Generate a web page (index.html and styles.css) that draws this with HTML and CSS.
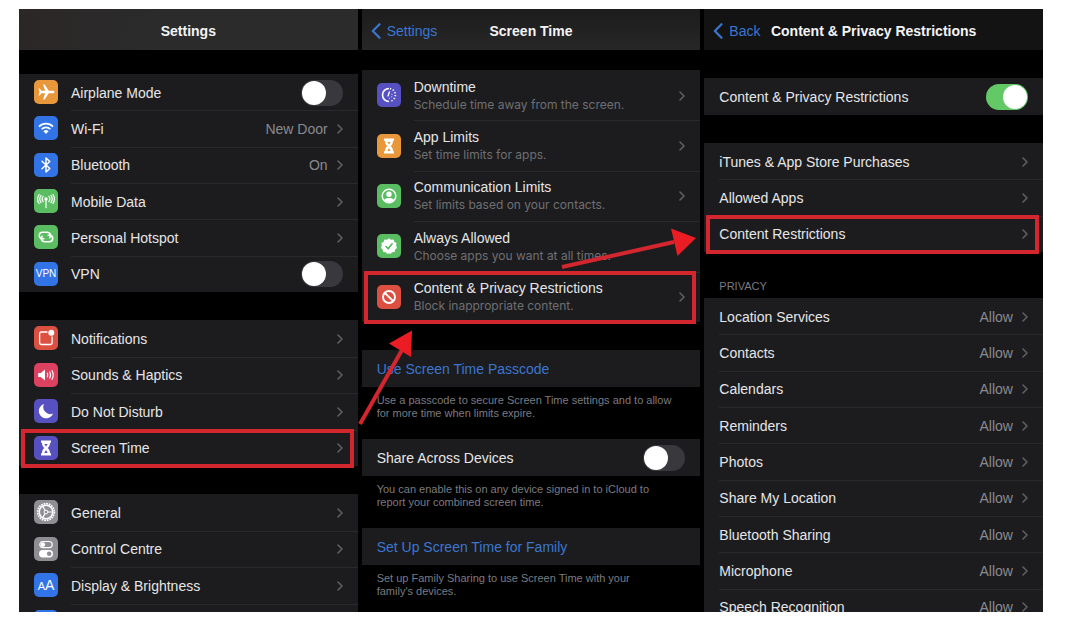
FILE: index.html
```html
<!DOCTYPE html>
<html lang="en">
<head>
<meta charset="utf-8">
<title>Screen Time settings</title>
<link rel="stylesheet" href="styles.css">
</head>
<body>
<svg class="defs" aria-hidden="true">
  <symbol id="chev" viewBox="0 0 6 10"><path d="M1 1l4 4-4 4" fill="none" stroke="currentColor" stroke-width="1.6" stroke-linecap="round" stroke-linejoin="round"/></symbol>
  <symbol id="back" viewBox="0 0 10 16"><path d="M8.500 1.200L1.800 8l6.700 6.800" fill="none" stroke="currentColor" stroke-width="2.200" stroke-linecap="round" stroke-linejoin="round"/></symbol>
  <symbol id="plane" viewBox="0 0 24 24"><path fill="#fff" d="M20.500 12c0 .8-1.100 1.300-2.200 1.300h-3.500L10.600 19.500H9.100l2-6.200H7.400L5.800 15.500H4.600L5.500 12l-.9-3.500h1.200l1.600 2.200h3.700l-2-6.200h1.500l4.200 6.200h3.500c1.100 0 2.200.5 2.200 1.300z"/></symbol>
  <symbol id="wifi" viewBox="0 0 24 24"><g fill="none" stroke="#fff" stroke-width="1.700"><path d="M5 10.600a9.900 9.900 0 0 1 14 0"/><path d="M7.600 13.200a6.300 6.300 0 0 1 8.800 0"/></g><path fill="#fff" d="M12 18l-2.600-2.700a3.700 3.700 0 0 1 5.200 0z"/></symbol>
  <symbol id="bt" viewBox="0 0 24 24"><path fill="none" stroke="#fff" stroke-width="1.500" stroke-linejoin="round" stroke-linecap="round" d="M8 8.300l7.800 7.200-3.800 3.500V5l3.800 3.500L8 15.700"/></symbol>
  <symbol id="cell" viewBox="0 0 24 24"><circle cx="12" cy="10" r="1.700" fill="#fff"/><g fill="none" stroke="#fff" stroke-width="1.200" stroke-linecap="round"><path d="M12 11v7.700M9.200 7.400a4 4 0 0 0 0 5.200M14.800 7.400a4 4 0 0 1 0 5.200M7.100 6.400a6 6 0 0 0 0 7.200M16.900 6.400a6 6 0 0 1 0 7.200M5.100 5.500a8 8 0 0 0 0 9M18.900 5.500a8 8 0 0 1 0 9"/></g></symbol>
  <symbol id="link" viewBox="0 0 24 24"><g fill="none" stroke="#fff" stroke-width="1.600" stroke-linecap="round"><path d="M9.800 13.800H8.600a3.300 3.300 0 0 1 0-6.600h4.800a3.300 3.300 0 0 1 2.400 5.500"/><path d="M14.200 10.200h1.200a3.300 3.300 0 0 1 0 6.600h-4.800a3.300 3.300 0 0 1-2.400-5.500"/></g></symbol>
  <symbol id="notif" viewBox="0 0 24 24"><path fill="none" stroke="#fff" stroke-width="1.300" d="M13.500 6H7.600A2 2 0 0 0 5.600 8v8.500a2 2 0 0 0 2 2h8.500a2 2 0 0 0 2-2V10.500"/><circle cx="17.300" cy="6.800" r="3" fill="#fff"/></symbol>
  <symbol id="sound" viewBox="0 0 24 24"><path fill="#fff" d="M4.200 10h2.600L11 6.500v11L6.800 14H4.200z"/><g fill="none" stroke="#fff" stroke-width="1.200" stroke-linecap="round"><path d="M13.300 10.200a3.500 3.500 0 0 1 0 3.600M15.700 9a6 6 0 0 1 0 6M18 7.700a8.500 8.500 0 0 1 0 8.600"/></g></symbol>
  <symbol id="moon" viewBox="0 0 24 24"><path fill="#fff" d="M10 5a7 7 0 0 0 9 9.500A7.300 7.300 0 1 1 10 5z"/></symbol>
  <symbol id="glass" viewBox="0 0 24 24"><path fill="#fff" d="M7 4.500h10v2.200h-1c0 3-1 4.200-2.500 5.300 1.500 1.100 2.500 2.300 2.500 5.300h1v2.200H7v-2.200h1c0-3 1-4.200 2.500-5.300C9 10.900 8 9.700 8 6.700H7z"/><path d="M10.300 8h3.400L12 10.600zM12 14l1.700 3h-3.400z" fill="currentColor"/></symbol>
  <symbol id="gear" viewBox="0 0 24 24"><g fill="none" stroke="#fff"><circle cx="12" cy="12" r="8.300" stroke-width="1.800" stroke-dasharray="1.700 .907"/><circle cx="12" cy="12" r="6.700" stroke-width="1.400"/><circle cx="12" cy="12" r="1.900"/><path stroke-width="1.200" d="M13.900 12h4.800M11 10.400L8.700 6.200M11 13.600l-2.300 4.200"/></g></symbol>
  <symbol id="control" viewBox="0 0 24 24"><rect x="5.800" y="4.500" width="12.400" height="6.200" rx="3.100" fill="none" stroke="#fff" stroke-width="1.200"/><circle cx="8.900" cy="7.600" r="2.300" fill="#fff"/><rect x="5" y="13" width="14" height="7.400" rx="3.700" fill="#fff"/><circle cx="15.200" cy="16.700" r="2.300" fill="#8e8e93"/></symbol>
  <symbol id="down" viewBox="0 0 24 24"><g fill="none" stroke="#fff"><path stroke-width="1.600" d="M12 5.500a6.500 6.500 0 0 0 0 13"/><path stroke-width="1.700" stroke-dasharray="1.200 1.800" d="M13 5.600a6.500 6.500 0 0 1 0 12.800"/><path stroke-width="1.300" stroke-linecap="round" d="M12.500 8.800L11 13"/><path stroke-width="1" stroke-dasharray="1 1.500" d="M12 15.500a3.500 3.500 0 0 0 2-6"/></g></symbol>
  <symbol id="person" viewBox="0 0 24 24"><circle cx="12" cy="12" r="6.800" fill="none" stroke="#fff" stroke-width="1.400"/><circle cx="12" cy="10.200" r="2.700" fill="#fff"/><path fill="#fff" d="M7.200 15.800c1.400-2.500 8.200-2.500 9.600 0-2.200 3-7.400 3-9.600 0z"/></symbol>
  <symbol id="seal" viewBox="0 0 24 24"><path fill="#fff" d="M12 4.300l2 1.500 2.500-.2.900 2.300 2.200 1.200-.5 2.500.9 2.300-1.900 1.600-.5 2.500-2.500.3L13.400 20 12 19.200l-1.600.8-1.700-1.700-2.500-.3-.5-2.500L3.900 14l.9-2.400-.5-2.500 2.300-1.200.9-2.300 2.500.2z"/><path fill="none" stroke="#55b95d" stroke-width="1.600" stroke-linecap="round" stroke-linejoin="round" d="M9 12.500l2.200 2.300 3.900-5"/></symbol>
  <symbol id="block" viewBox="0 0 24 24"><circle cx="12" cy="12" r="6" fill="none" stroke="#fff" stroke-width="1.900"/><path stroke="#fff" stroke-width="1.900" d="M7.800 7.800l8.400 8.400"/></symbol>
</svg>

<main class="board">
  <section class="phone">
    <header class="bar bar-warm"><h1>Settings</h1></header>
    <div class="group group-six">
      <label class="row"><span class="icon orange"><svg><use href="#plane"/></svg></span><span class="body"><span class="name">Airplane Mode</span><input type="checkbox" role="switch" class="switch"></span></label>
      <a class="row" href="#wifi-page"><span class="icon blue"><svg><use href="#wifi"/></svg></span><span class="body"><span class="name">Wi-Fi</span><span class="value">New Door</span><svg class="chev"><use href="#chev"/></svg></span></a>
      <a class="row" href="#bluetooth"><span class="icon blue"><svg><use href="#bt"/></svg></span><span class="body"><span class="name">Bluetooth</span><span class="value">On</span><svg class="chev"><use href="#chev"/></svg></span></a>
      <a class="row" href="#mobile"><span class="icon green"><svg><use href="#cell"/></svg></span><span class="body"><span class="name">Mobile Data</span><svg class="chev"><use href="#chev"/></svg></span></a>
      <a class="row" href="#hotspot"><span class="icon green"><svg><use href="#link"/></svg></span><span class="body"><span class="name">Personal Hotspot</span><svg class="chev"><use href="#chev"/></svg></span></a>
      <label class="row"><span class="icon blue vpn">VPN</span><span class="body"><span class="name">VPN</span><input type="checkbox" role="switch" class="switch"></span></label>
    </div>
    <div class="group group-four">
      <a class="row" href="#notifications"><span class="icon red"><svg><use href="#notif"/></svg></span><span class="body"><span class="name">Notifications</span><svg class="chev"><use href="#chev"/></svg></span></a>
      <a class="row" href="#sounds"><span class="icon pink"><svg><use href="#sound"/></svg></span><span class="body"><span class="name">Sounds &amp; Haptics</span><svg class="chev"><use href="#chev"/></svg></span></a>
      <a class="row" href="#dnd"><span class="icon purple"><svg><use href="#moon"/></svg></span><span class="body"><span class="name">Do Not Disturb</span><svg class="chev"><use href="#chev"/></svg></span></a>
      <a class="row marked" href="#screen-time"><span class="icon purple"><svg><use href="#glass"/></svg></span><span class="body"><span class="name">Screen Time</span><svg class="chev"><use href="#chev"/></svg></span></a>
    </div>
    <div class="group group-four">
      <a class="row" href="#general"><span class="icon gray"><svg><use href="#gear"/></svg></span><span class="body"><span class="name">General</span><svg class="chev"><use href="#chev"/></svg></span></a>
      <a class="row" href="#control-centre"><span class="icon gray"><svg><use href="#control"/></svg></span><span class="body"><span class="name">Control Centre</span><svg class="chev"><use href="#chev"/></svg></span></a>
      <a class="row" href="#display"><span class="icon blue aa"><small>A</small>A</span><span class="body"><span class="name">Display &amp; Brightness</span><svg class="chev"><use href="#chev"/></svg></span></a>
      <div class="row"><span class="icon blue"></span><span class="body"></span></div>
    </div>
  </section>

  <section class="phone">
    <header class="bar bar-mid"><a class="back" href="#settings"><svg><use href="#back"/></svg>Settings</a><h1>Screen Time</h1></header>
    <div class="group group-tall">
      <a class="row" href="#downtime"><span class="icon purple"><svg><use href="#down"/></svg></span><span class="body"><span class="name">Downtime<span class="sub">Schedule time away from the screen.</span></span><svg class="chev"><use href="#chev"/></svg></span></a>
      <a class="row" href="#limits"><span class="icon orange"><svg><use href="#glass"/></svg></span><span class="body"><span class="name">App Limits<span class="sub">Set time limits for apps.</span></span><svg class="chev"><use href="#chev"/></svg></span></a>
      <a class="row" href="#communication"><span class="icon green"><svg><use href="#person"/></svg></span><span class="body"><span class="name">Communication Limits<span class="sub">Set limits based on your contacts.</span></span><svg class="chev"><use href="#chev"/></svg></span></a>
      <a class="row" href="#always"><span class="icon green"><svg><use href="#seal"/></svg></span><span class="body"><span class="name">Always Allowed<span class="sub">Choose apps you want at all times.</span></span></span></a>
      <a class="row marked" href="#privacy"><span class="icon red"><svg><use href="#block"/></svg></span><span class="body"><span class="name">Content &amp; Privacy Restrictions<span class="sub">Block inappropriate content.</span></span><svg class="chev"><use href="#chev"/></svg></span></a>
    </div>
    <div class="group"><button class="row action" type="button">Use Screen Time Passcode</button></div>
    <p class="note">Use a passcode to secure Screen Time settings and to allow<br>for more time when limits expire.</p>
    <div class="group"><label class="row"><span class="body"><span class="name">Share Across Devices</span><input type="checkbox" role="switch" class="switch"></span></label></div>
    <p class="note">You can enable this on any device signed in to iCloud to<br>report your combined screen time.</p>
    <div class="group"><button class="row action" type="button">Set Up Screen Time for Family</button></div>
    <p class="note">Set up Family Sharing to use Screen Time with your<br>family's devices.</p>
  </section>

  <section class="phone">
    <header class="bar bar-dark"><a class="back" href="#screen-time"><svg><use href="#back"/></svg>Back</a><h1>Content &amp; Privacy Restrictions</h1></header>
    <div class="group group-master"><label class="row"><span class="body"><span class="name">Content &amp; Privacy Restrictions</span><input type="checkbox" role="switch" class="switch" checked></span></label></div>
    <div class="group group-three">
      <a class="row" href="#purchases"><span class="body"><span class="name">iTunes &amp; App Store Purchases</span><svg class="chev"><use href="#chev"/></svg></span></a>
      <a class="row" href="#apps"><span class="body"><span class="name">Allowed Apps</span><svg class="chev"><use href="#chev"/></svg></span></a>
      <a class="row marked" href="#content"><span class="body"><span class="name">Content Restrictions</span><svg class="chev"><use href="#chev"/></svg></span></a>
    </div>
    <h2 class="caption">PRIVACY</h2>
    <div class="group group-nine">
      <a class="row" href="#p1"><span class="body"><span class="name">Location Services</span><span class="value">Allow</span><svg class="chev"><use href="#chev"/></svg></span></a>
      <a class="row" href="#p2"><span class="body"><span class="name">Contacts</span><span class="value">Allow</span><svg class="chev"><use href="#chev"/></svg></span></a>
      <a class="row" href="#p3"><span class="body"><span class="name">Calendars</span><span class="value">Allow</span><svg class="chev"><use href="#chev"/></svg></span></a>
      <a class="row" href="#p4"><span class="body"><span class="name">Reminders</span><span class="value">Allow</span><svg class="chev"><use href="#chev"/></svg></span></a>
      <a class="row" href="#p5"><span class="body"><span class="name">Photos</span><span class="value">Allow</span><svg class="chev"><use href="#chev"/></svg></span></a>
      <a class="row" href="#p6"><span class="body"><span class="name">Share My Location</span><span class="value">Allow</span><svg class="chev"><use href="#chev"/></svg></span></a>
      <a class="row" href="#p7"><span class="body"><span class="name">Bluetooth Sharing</span><span class="value">Allow</span><svg class="chev"><use href="#chev"/></svg></span></a>
      <a class="row" href="#p8"><span class="body"><span class="name">Microphone</span><span class="value">Allow</span><svg class="chev"><use href="#chev"/></svg></span></a>
      <a class="row" href="#p9"><span class="body"><span class="name">Speech Recognition</span><span class="value">Allow</span><svg class="chev"><use href="#chev"/></svg></span></a>
    </div>
  </section>

  <svg class="arrows" viewBox="0 0 1024 603" preserveAspectRatio="none" aria-hidden="true">
    <g stroke="#d3262e" stroke-width="4"><path d="M341 415L383 341"/><path d="M543 258L655 233"/></g>
    <g fill="#ea1c24"><path d="M393 321.500L370 334.500L392 348z"/><path d="M677 229L652 219.500L658.500 247z"/></g>
  </svg>
</main>
</body>
</html>
```

FILE: styles.css
```css
* {
  box-sizing: border-box;
}

body {
  margin: 0;
  padding: 9px 24px 21px 19px;
  background: #fff;
  color: #e6e6e8;
  font: 14px/18px "Liberation Sans", Arial, sans-serif;
}

h1,
h2,
p {
  margin: 0;
}

.defs {
  display: none;
}

.board {
  position: relative;
  display: grid;
  grid-template-columns: repeat(3, minmax(0, 1fr));
  gap: 4px;
  height: calc(100vh - 30px);
  overflow: hidden;
  background: #000;
}

.arrows {
  position: absolute;
  inset: 0;
  width: 100%;
  height: 100%;
  pointer-events: none;
}

.phone {
  min-width: 0;
}

.bar {
  display: grid;
  grid-template-columns: 1fr auto 1fr;
  align-items: center;
  height: 41px;
  padding-top: 3px;
}

.bar-warm {
  background: linear-gradient(100deg, #2b2726, #2b2b2c 40%);
}

.bar-mid {
  background: linear-gradient(#1c1c1d, #272728);
}

.bar-dark {
  background: #131314;
}

.bar h1 {
  grid-column: 2;
  color: #f4f4f5;
  font-size: 14px;
  font-weight: 600;
}

.back {
  display: flex;
  align-items: center;
  gap: 6px;
  padding-left: 9px;
  color: #3b76d0;
  text-decoration: none;
}

.back svg {
  width: 10px;
  height: 16px;
}

.group {
  display: grid;
  grid-auto-rows: 1fr;
  min-height: 37px;
  background: #1c1c1e;
}

.group + .group {
  margin-top: 28px;
}

.group-six {
  min-height: 218px;
  margin-top: 24px;
}

.group-four {
  min-height: 146px;
}

.group-tall {
  min-height: 252px;
  margin-top: 20px;
}

.group-master {
  margin-top: 28px;
}

.group-three {
  min-height: 109px;
}

.group-nine {
  min-height: 327px;
}

.row {
  position: relative;
  display: flex;
  align-items: center;
  gap: 13px;
  padding: 0 0 0 15px;
  color: inherit;
  text-decoration: none;
}

.body {
  display: flex;
  flex: 1;
  align-items: center;
  align-self: stretch;
  gap: 9px;
  min-width: 0;
  padding-right: 15px;
  border-top: 1px solid #29292b;
}

.row:first-child .body {
  border-top-color: transparent;
}

.name {
  flex: 1;
}

.sub {
  display: block;
  color: #6f6f73;
  font-family: Inter, "Liberation Sans", sans-serif;
  font-size: 12px;
}

.value {
  color: #8a8a8e;
}

.chev {
  width: 6px;
  height: 10px;
  color: #5f5f63;
}

.icon {
  display: flex;
  align-items: center;
  justify-content: center;
  width: 24px;
  height: 24px;
  border-radius: 5px;
  color: #fff;
}

.icon svg {
  width: 24px;
  height: 24px;
}

.orange {
  background: #e8973a;
}

.orange svg {
  color: #e8973a;
}

.blue {
  background: #3273e6;
}

.green {
  background: #5bbd61;
}

.red {
  background: #dc5042;
}

.pink {
  background: #dc4160;
}

.purple {
  background: #5650c0;
}

.purple svg {
  color: #5650c0;
}

.gray {
  background: #8e8e93;
}

.vpn {
  font-size: 10px;
}

.aa {
  align-items: baseline;
  font-size: 14px;
  line-height: 24px;
}

.aa small {
  font-size: 11px;
}

.switch {
  appearance: none;
  display: flex;
  width: 42px;
  height: 26px;
  margin: 0;
  padding: 1px;
  border-radius: 13px;
  background: #39393d;
}

.switch::before {
  width: 24px;
  height: 24px;
  border-radius: 50%;
  background: #fff;
  content: "";
}

.switch:checked {
  justify-content: flex-end;
  background: #63c967;
}

.marked::after {
  position: absolute;
  inset: -1px 4px -2px 2px;
  border: 4px solid #d3262e;
  content: "";
}

.action {
  border: 0;
  background: none;
  color: #3b76d0;
  font: inherit;
}

.note {
  height: 52px;
  padding: 7px 15px 0;
  color: #7b7b80;
  font-size: 11px;
  line-height: 13px;
}

.caption {
  height: 46px;
  padding: 25px 15px 0;
  color: #7b7b80;
  font-size: 11px;
  font-weight: 400;
}
```
